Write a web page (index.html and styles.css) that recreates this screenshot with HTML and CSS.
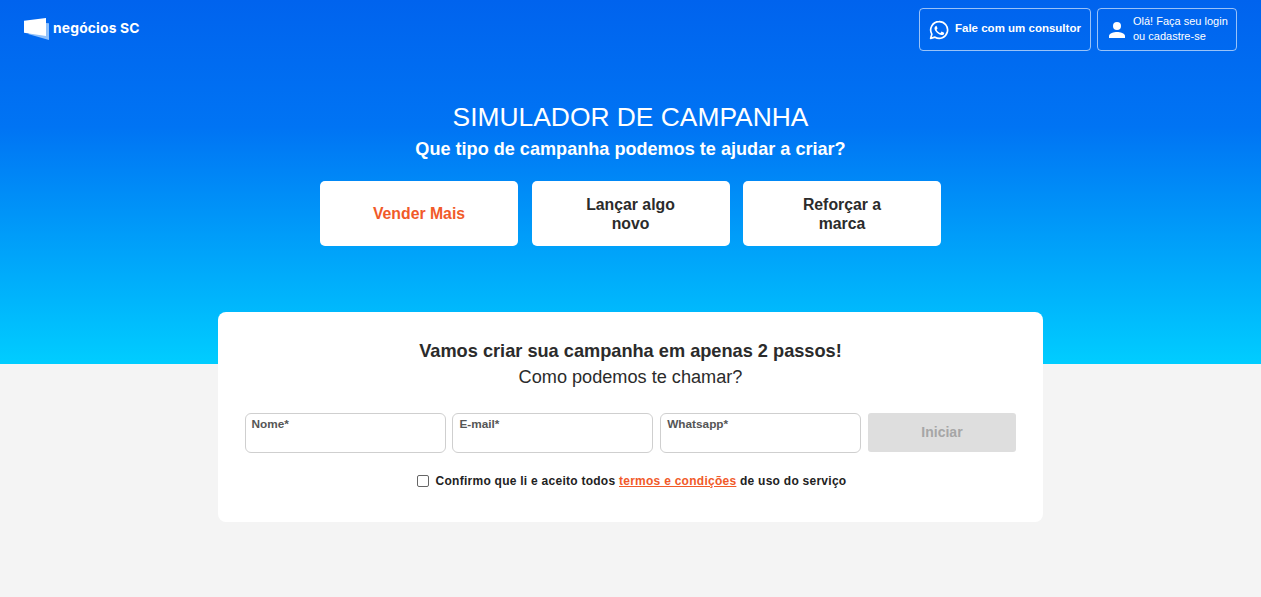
FILE: index.html
```html
<!DOCTYPE html>
<html lang="pt-BR">
<head>
  <meta charset="UTF-8">
  <meta name="viewport" content="width=device-width, initial-scale=1.0">
  <title>Simulador de Campanha</title>
  <link rel="stylesheet" href="styles.css">
</head>
<body>
  <section class="hero">
    <header class="topbar">
      <a class="logo" href="#">
        <svg class="logo-icon" width="25" height="23" viewBox="0 0 25 23">
          <path d="M22 6 L25 6.300 L25 23 L4 17 Z" fill="#8fc0fa"/>
          <path d="M0 3.700 L22 1 L22 19 L0 15.700 Z" fill="#fff"/>
        </svg>
        <span>negócios SC</span>
      </a>
      <nav class="top-actions">
        <a class="top-btn btn-consultor" href="#">
          <svg width="20" height="20" viewBox="0 0 24 24" fill="none">
            <path d="M12 2a10 10 0 0 0-8.600 15L2 22l5.200-1.400A10 10 0 1 0 12 2Z" stroke="#fff" stroke-width="2" stroke-linejoin="round"/>
            <path d="M8.600 7.200c-.3 0-.7.1-1 .5-.4.4-1 1.100-1 2.500s1 2.800 1.200 3c.2.200 2 3.100 4.900 4.200 2.400.9 2.900.7 3.400.7.500-.1 1.700-.7 1.900-1.400.2-.6.2-1.200.2-1.300-.1-.1-.3-.2-.6-.4l-2-1c-.3-.1-.5-.1-.7.2l-.9 1.200c-.2.200-.4.200-.7.100-.3-.2-1.300-.5-2.400-1.500-.9-.8-1.500-1.800-1.700-2.100-.2-.3 0-.5.100-.6l.5-.6c.2-.2.2-.3.3-.5.100-.2 0-.4 0-.5l-.9-2.200c-.2-.6-.5-.5-.7-.5Z" fill="#fff"/>
          </svg>
          <span>Fale com um consultor</span>
        </a>
        <a class="top-btn btn-login" href="#">
          <svg width="16" height="16" viewBox="0 0 16 16" fill="#fff">
            <circle cx="8" cy="4" r="4"/>
            <path d="M0 16v-2c0-2.700 5-4 8-4s8 1.300 8 4v2Z"/>
          </svg>
          <span>Olá! Faça seu login<br>ou cadastre-se</span>
        </a>
      </nav>
    </header>

    <h1 class="title">SIMULADOR DE CAMPANHA</h1>
    <p class="subtitle">Que tipo de campanha podemos te ajudar a criar?</p>

    <div class="options">
      <button class="option active">Vender Mais</button>
      <button class="option">Lançar algo<br>novo</button>
      <button class="option">Reforçar a<br>marca</button>
    </div>
  </section>

  <main class="form-card">
    <h2>Vamos criar sua campanha em apenas 2 passos!</h2>
    <p class="form-question">Como podemos te chamar?</p>

    <form class="form-row">
      <label class="field"><span>Nome*</span><input type="text"></label>
      <label class="field"><span>E-mail*</span><input type="email"></label>
      <label class="field"><span>Whatsapp*</span><input type="tel"></label>
      <button class="btn-start" type="button" disabled>Iniciar</button>
    </form>

    <label class="terms">
      <span class="checkbox"></span>
      <span>Confirmo que li e aceito todos <a href="#">termos e condições</a> de uso do serviço</span>
    </label>
  </main>
</body>
</html>
```

FILE: styles.css
```css
* {
  box-sizing: border-box;
  margin: 0;
  padding: 0;
}

body {
  font-family: "Liberation Sans", Arial, sans-serif;
  background-color: #f4f4f4;
  color: #2b2b2b;
  height: 597px;
  overflow: hidden;
}

a {
  text-decoration: none;
  color: inherit;
}

/* Topo azul */
.hero {
  height: 364px;
  background: linear-gradient(180deg, #0063ee 0%, #0074f4 35%, #00cdff 100%);
  color: white;
  text-align: center;
}

.topbar {
  display: flex;
  justify-content: space-between;
  align-items: flex-start;
  padding: 8px 24px 0;
  height: 100px;
}

.logo {
  display: flex;
  align-items: center;
  gap: 4px;
  margin-top: 9px;
  font-family: Inter, sans-serif;
  font-weight: 700;
  font-size: 13.800px;
  letter-spacing: 0.2px;
}

.logo span {
  margin-bottom: 1px;
}

.top-actions {
  display: flex;
  gap: 6px;
}

.top-btn {
  display: flex;
  align-items: center;
  height: 43px;
  border: 1px solid rgba(255, 255, 255, 0.6);
  border-radius: 4px;
  text-align: left;
}

.btn-consultor {
  width: 172px;
  padding-left: 9px;
  gap: 6px;
  font-size: 11.500px;
  font-weight: bold;
}

.btn-consultor span {
  margin-bottom: 3px;
}

.btn-login {
  width: 140px;
  padding-left: 11px;
  gap: 8px;
  font-size: 11px;
  line-height: 15px;
}

.btn-login span {
  margin-bottom: 2px;
}

.title {
  font-size: 26.400px;
  font-weight: normal;
  line-height: 34px;
}

.subtitle {
  font-size: 18.100px;
  font-weight: bold;
  line-height: 30px;
  margin-bottom: 17px;
}

.options {
  display: flex;
  justify-content: center;
  gap: 13.500px;
}

.option {
  width: 198px;
  height: 65px;
  background-color: white;
  color: #2b2b2b;
  border: none;
  border-radius: 5px;
  font-family: inherit;
  font-size: 15.800px;
  font-weight: bold;
  line-height: 19px;
}

.option.active {
  color: #f15a29;
}

/* Cartão do formulário */
.form-card {
  width: 825px;
  height: 210px;
  margin: -52px auto 0;
  padding: 28px 26.600px 0;
  background-color: white;
  border-radius: 8px;
  text-align: center;
  position: relative;
}

.form-card h2 {
  font-size: 18.200px;
  line-height: 22px;
}

.form-question {
  font-size: 18.150px;
  line-height: 30px;
  margin-bottom: 21px;
}

.form-row {
  display: flex;
  gap: 6.800px;
  text-align: left;
}

.field {
  display: block;
  position: relative;
  width: 201px;
  height: 40px;
}

.field span {
  position: absolute;
  top: 4px;
  left: 7px;
  font-size: 11.800px;
  font-weight: bold;
  color: #555;
}

.field input {
  width: 100%;
  height: 100%;
  border: 1px solid #cfcfcf;
  border-radius: 6px;
  background: white;
}

.btn-start {
  width: 148px;
  height: 39px;
  padding-bottom: 2px;
  background-color: #dedede;
  color: #a6a6a6;
  border: none;
  border-radius: 3px;
  font-family: inherit;
  font-size: 14px;
  font-weight: bold;
}

.terms {
  display: flex;
  justify-content: center;
  align-items: center;
  gap: 7px;
  margin-top: 21px;
  padding-left: 2px;
  font-size: 12px;
  font-weight: bold;
  letter-spacing: 0.26px;
  color: #222;
}

.terms a {
  color: #f15a29;
  text-decoration: underline;
}

.checkbox {
  width: 12px;
  height: 12px;
  border: 1.500px solid #666;
  border-radius: 2px;
}
```
